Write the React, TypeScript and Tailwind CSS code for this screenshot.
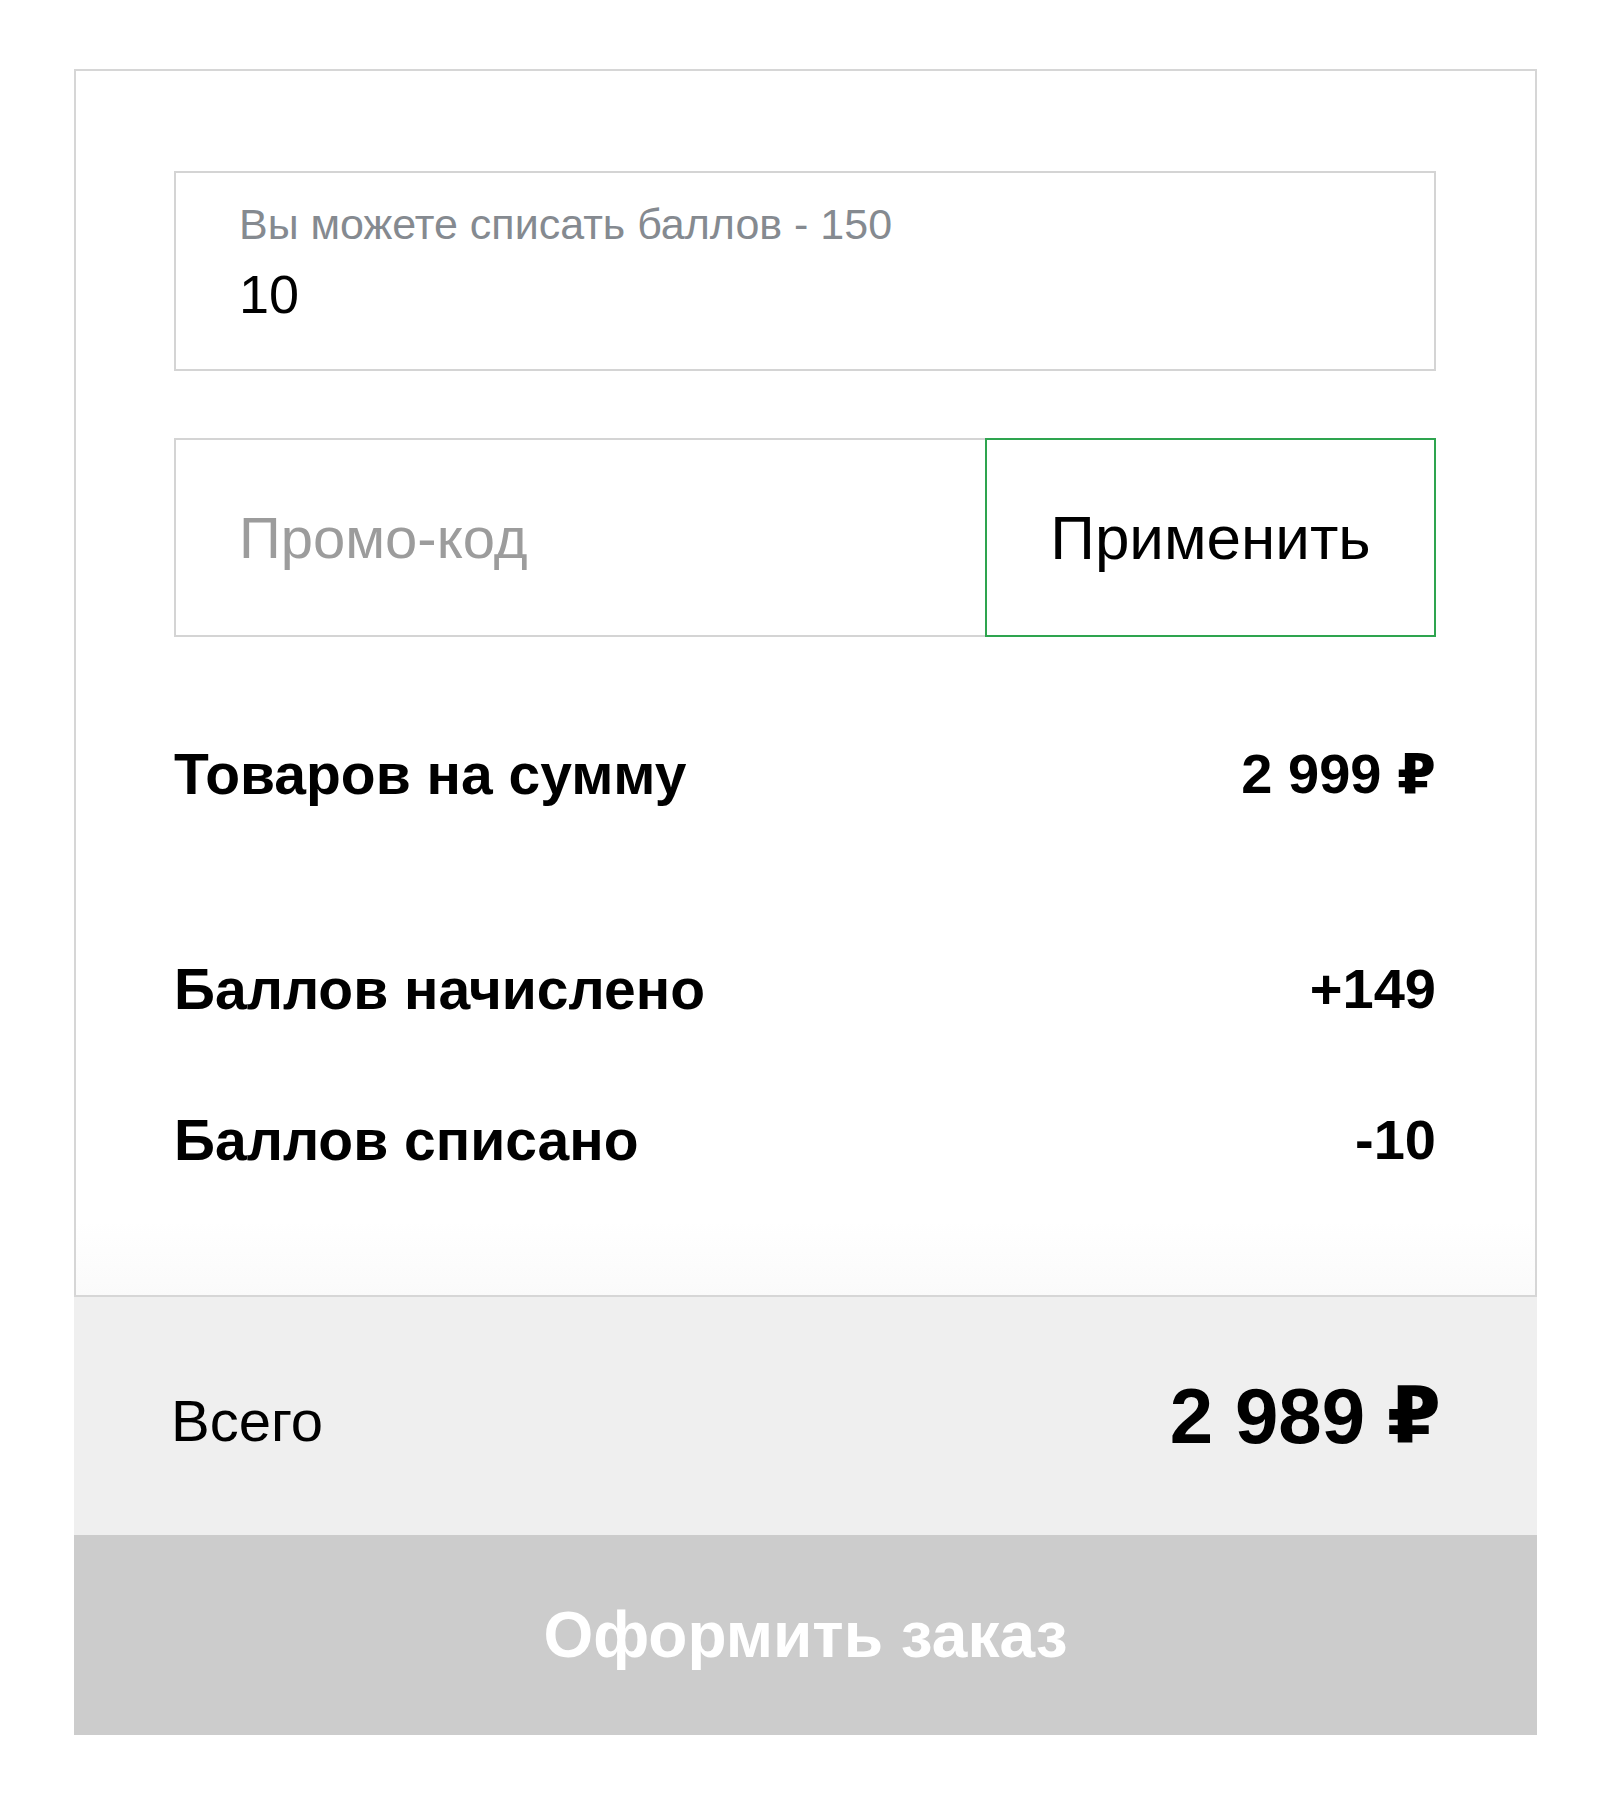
import React from "react";

const font = { fontFamily: '"Liberation Sans", Arial, "DejaVu Sans", sans-serif' };

function SummaryRow({ label, value, className }: { label: string; value: string; className?: string }) {
  return (
    <div className={"flex h-[100px] items-center justify-between " + (className ?? "")}>
      <span className="text-[57px] font-bold leading-none text-black">{label}</span>
      <span className="text-[56px] font-bold leading-none text-black">{value}</span>
    </div>
  );
}

export default function App() {
  return (
    <div className="min-h-[1810px] w-[1599px] bg-white pl-[74px] pt-[69px]" style={font}>
      <div className="w-[1463px]">
        {/* Points + promo + summary */}
        <div className="h-[1228px] border-2 border-[#d6d6d6] bg-gradient-to-b from-white from-[94%] to-[#fafafa] pl-[98px] pr-[99px] pt-[100px]">
          <div className="flex h-[200px] flex-col border-2 border-[#d4d4d4] pl-[63px] pt-[29px]">
            <span className="text-[43px] leading-[44px] text-[#858a90]">Вы можете списать баллов - 150</span>
            <span className="mt-[18px] text-[54px] leading-[60px] text-black">10</span>
          </div>

          <div className="mt-[67px] flex h-[199px]">
            <div className="flex w-[811px] items-center border-2 border-r-0 border-[#d4d4d4] pl-[63px]">
              <span className="text-[58px] leading-none text-[#9c9c9c]">Промо-код</span>
            </div>
            <button className="flex flex-1 items-center justify-center border-2 border-[#2ea44f] bg-white">
              <span className="text-[62px] leading-none text-black">Применить</span>
            </button>
          </div>

          <SummaryRow className="mt-[87px]" label="Товаров на сумму" value="2 999 ₽" />
          <SummaryRow className="mt-[115px]" label="Баллов начислено" value="+149" />
          <SummaryRow className="mt-[51px]" label="Баллов списано" value="-10" />
        </div>

        {/* Total */}
        <div className="flex h-[238px] items-center justify-between bg-[#efefef] pl-[97px] pr-[96px]">
          <span className="mt-[10px] text-[58px] leading-none text-black">Всего</span>
          <span className="text-[78px] font-bold leading-none text-black">2 989 ₽</span>
        </div>

        <button className="flex h-[200px] w-full items-center justify-center bg-[#cccccc]">
          <span className="text-[64px] font-bold leading-none text-white">Оформить заказ</span>
        </button>
      </div>
    </div>
  );
}
